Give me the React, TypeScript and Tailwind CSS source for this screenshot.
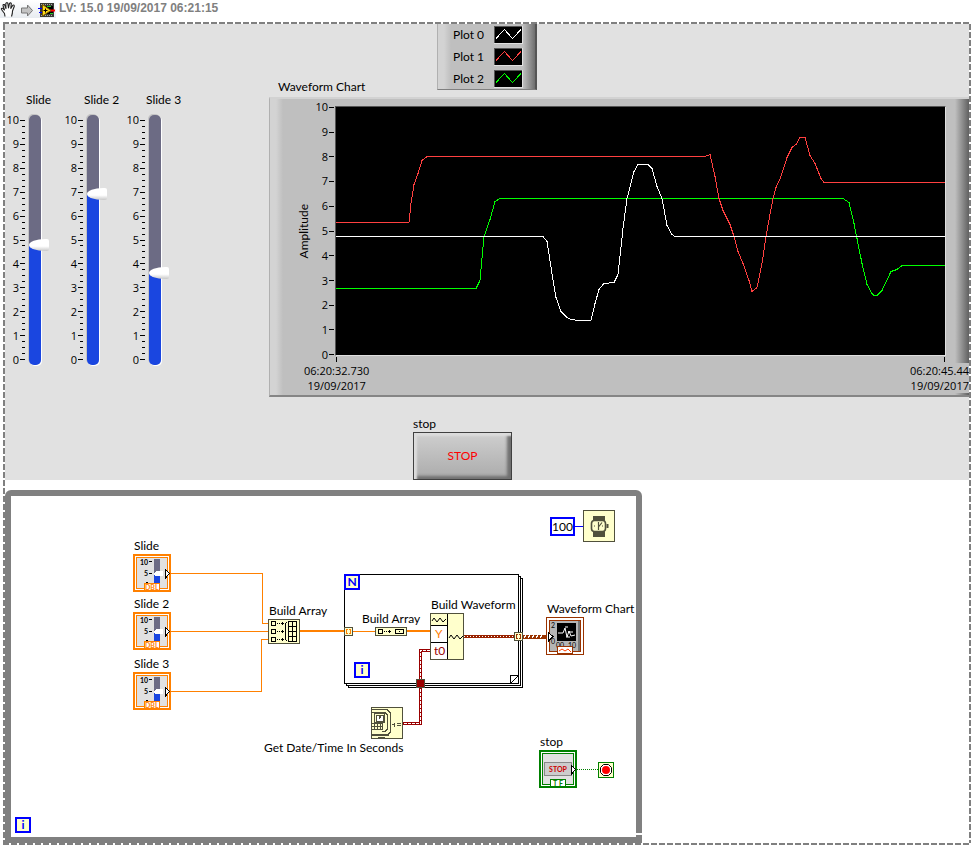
import { useState, type ReactNode } from "react";

type Point = [number, number];

interface Plot {
  name: string;
  color: string;
  points: Point[];
}

const PLOTS: Plot[] = [
  {
    name: "Plot 0",
    color: "#ffffff",
    points: [
      [0, 129], [207, 129], [211, 134], [216, 166], [220, 190], [225, 204], [231, 210], [235, 212],
      [242, 213], [255, 213], [259, 196], [263, 182], [268, 176], [278, 175], [282, 167], [287, 121],
      [291, 91], [298, 64], [302, 57], [312, 57], [316, 61], [321, 79], [326, 91], [331, 118],
      [336, 127], [339, 129], [609, 129],
    ],
  },
  {
    name: "Plot 1",
    color: "#ff4040",
    points: [
      [0, 115], [73, 115], [75, 96], [78, 77], [82, 66], [86, 53], [91, 49], [369, 49], [374, 47],
      [379, 69], [383, 91], [387, 103], [394, 117], [398, 129], [402, 144], [407, 156], [413, 173],
      [416, 184], [421, 180], [426, 156], [430, 129], [434, 107], [437, 91], [440, 80], [445, 69],
      [451, 50], [456, 40], [460, 37], [464, 30], [469, 30], [474, 48], [479, 56], [485, 71],
      [488, 75], [609, 75],
    ],
  },
  {
    name: "Plot 2",
    color: "#00ff00",
    points: [
      [0, 181], [140, 181], [144, 173], [148, 129], [154, 112], [159, 94], [164, 91], [507, 91],
      [513, 95], [518, 116], [521, 131], [526, 156], [531, 177], [536, 186], [538, 188], [541, 188],
      [546, 183], [555, 164], [561, 162], [566, 158], [609, 158],
    ],
  },
];

const SCALE = [10, 9, 8, 7, 6, 5, 4, 3, 2, 1, 0];

const toPoints = (points: Point[]) => points.map((p) => p.join(",")).join(" ");

function HandIcon() {
  return (
    <svg width="16" height="18" viewBox="0 0 16 18" aria-hidden="true">
      <path
        d="M5 16.5 L4.5 13.5 L1.5 9.5 Q1 8 2.5 8.2 L4.5 10 L3 5.5 Q3 4 4.5 4.6 L6 8.5 L5.8 3.5 Q6.6 2 7.8 3.2 L8.5 8 L9.5 3.4 Q10.6 2.2 11.3 3.6 L10.8 8.4 L12.8 5.2 Q14.4 4.6 14.3 6.3 L12.5 11 L12.3 13.5 L11.5 16.5"
        fill="#fff"
        stroke="#222"
        strokeWidth="1.1"
        strokeLinejoin="round"
      />
    </svg>
  );
}

function ArrowIcon() {
  return (
    <svg width="14" height="18" viewBox="0 0 14 18" aria-hidden="true">
      <path d="M1.5 8 H7.5 V5 L12.5 10.5 L7.5 16 V13 H1.5 Z" fill="#c3c3c3" stroke="#777" />
    </svg>
  );
}

function ViIcon() {
  return (
    <svg width="18" height="18" viewBox="0 0 18 18" aria-hidden="true">
      <rect x="2" y="3" width="14" height="14" fill="#3a3a34" />
      <path d="M3 4.5H15M3 15.5H15" stroke="#aaa" strokeDasharray="1 1" />
      <rect x="4" y="6" width="11" height="8" fill="#000" />
      <path d="M9 6.5h4M12 13.5h3" stroke="#2c2" />
      <path d="M0 8.5H5M1 12.5H5" stroke="#00f" strokeWidth="1" />
      <path d="M12 10.5H17" stroke="#f00" strokeWidth="2" />
      <path d="M4.5 4.5 L13 10.5 L4.5 16 Z" fill="#ffd91a" stroke="#7a5c00" />
      <path d="M5.5 10.5H9.5M7.5 8.5V12.5" stroke="#000" />
    </svg>
  );
}

function Slide({ id, label, initial }: { id: string; label: string; initial: number }) {
  const [value, setValue] = useState(initial);
  const fill = 2.5 + value * 9.5;

  return (
    <div>
      <label htmlFor={id} className="block h-4 pl-[21px] whitespace-nowrap">
        {label}
      </label>
      <div className="flex h-64 items-center mt-1">
        <div className="flex flex-col justify-between h-64 w-[14px] text-[11px] leading-4 font-['Open_Sans',sans-serif]">
          {SCALE.map((n) => (
            <span key={n} className="flex justify-end">{n}</span>
          ))}
        </div>
        <svg width="10" height="240" shapeRendering="crispEdges" aria-hidden="true">
          {Array.from({ length: 41 }, (_, i) => (
            <rect
              key={i}
              x={i % 4 === 0 ? 1 : 3}
              y={Math.round((i * 239) / 40)}
              width={i % 4 === 0 ? 5 : 3}
              height="1"
              fill="#000"
            />
          ))}
        </svg>
        <input
          id={id}
          type="range"
          min={0}
          max={10}
          step={0.05}
          value={value}
          onChange={(e) => setValue(Number(e.target.value))}
          style={{ backgroundImage: `linear-gradient(to top, #1a46e0 ${fill}%, #6c6b84 ${fill}%)` }}
          className="appearance-none w-3 h-[250px] rounded-[5px] shadow-[1px_1px_0_#fff,-1px_-1px_0_#c4c4c4] [writing-mode:vertical-lr] [direction:rtl] [&::-webkit-slider-thumb]:appearance-none [&::-webkit-slider-thumb]:ml-2 [&::-webkit-slider-thumb]:w-5 [&::-webkit-slider-thumb]:h-3 [&::-webkit-slider-thumb]:bg-linear-to-b [&::-webkit-slider-thumb]:from-white [&::-webkit-slider-thumb]:from-60% [&::-webkit-slider-thumb]:to-[#c8c8c8] [&::-webkit-slider-thumb]:[border-radius:16px_2px_2px_16px/6px_2px_2px_6px]"
        />
      </div>
    </div>
  );
}

function Legend() {
  return (
    <div className="w-25 h-[66px] border-l border-l-[#b0b0b0] border-r-2 border-r-[#555] border-b border-b-[#808080] bg-[linear-gradient(90deg,#d3d3d3_0_6px,#bfbfbf_13px_calc(100%-12px),#6e6e6e)]">
      {PLOTS.map((plot) => (
        <div key={plot.name} className="flex items-center h-[22px] pl-[15px] gap-[11px]">
          <span className="w-[30px] whitespace-nowrap">{plot.name}</span>
          <svg width="29" height="18" shapeRendering="crispEdges" aria-hidden="true">
            <rect width="29" height="18" fill="#e0e0e0" />
            <rect width="28" height="17" fill="#555" />
            <rect x="1" y="1" width="27" height="16" fill="#000" />
            <path d="M2 12.5 L10.5 3.5 L18.5 12.5 L27 3.5" fill="none" stroke={plot.color} />
          </svg>
        </div>
      ))}
    </div>
  );
}

function WaveformChart() {
  return (
    <figure className="border-t-2 border-t-[#d2d2d2] border-b-2 border-b-[#858585] border-l border-l-[#b0b0b0] pb-0.5 bg-[linear-gradient(90deg,#d3d3d3_0_6px,#bfbfbf_13px_calc(100%-14px),#606060)]">
      <div className="flex pl-[26px] pr-[23px]">
        <div className="w-4 flex items-center justify-center">
          <span className="[writing-mode:vertical-rl] rotate-180">Amplitude</span>
        </div>
        <div className="flex flex-col justify-between h-66 w-4 text-[11px] leading-4 font-['Open_Sans',sans-serif]">
          {SCALE.map((n) => (
            <span key={n} className="flex justify-end">{n}</span>
          ))}
        </div>
        <svg width="7" height="248" className="mt-2" shapeRendering="crispEdges" aria-hidden="true">
          {SCALE.map((n, i) => (
            <rect key={n} x="1" y={Math.round(i * 24.7)} width="5" height="1" fill="#000" />
          ))}
        </svg>
        <div className="flex-1 min-w-0 mt-[7px]">
          <div className="h-[250px] bg-black border border-t-[#555] border-l-[#555] border-b-[#e0e0e0] border-r-[#e0e0e0]">
            <svg
              className="block w-full h-full"
              viewBox="0 0 609 248"
              preserveAspectRatio="none"
              shapeRendering="crispEdges"
              role="img"
              aria-label="Waveform Chart"
            >
              <g transform="translate(0 0.5)">
                {[...PLOTS].reverse().map((plot) => (
                  <polyline
                    key={plot.name}
                    points={toPoints(plot.points)}
                    fill="none"
                    stroke={plot.color}
                    vectorEffect="non-scaling-stroke"
                  />
                ))}
              </g>
            </svg>
          </div>
          <div className="flex justify-between px-px mt-px">
            <div className="w-px h-[5px] bg-black" />
            <div className="w-px h-[5px] bg-black" />
          </div>
        </div>
      </div>
      <div className="flex justify-between pl-[34px] text-[11px] leading-[15px] font-['Open_Sans',sans-serif] whitespace-nowrap">
        <div className="text-center">
          <p>06:20:32.730</p>
          <p>19/09/2017</p>
        </div>
        <div className="text-right bg-[#bfbfbf]">
          <p>06:20:45.44</p>
          <p>19/09/2017</p>
        </div>
      </div>
    </figure>
  );
}

function FrontPanel() {
  return (
    <section className="flex bg-[#e1e1e1]">
      <div className="grid grid-cols-[58px_62px_58px] pt-[68px] mr-[86px]">
        <Slide id="slide" label="Slide" initial={4.8} />
        <Slide id="slide-2" label="Slide 2" initial={6.95} />
        <Slide id="slide-3" label="Slide 3" initial={3.6} />
      </div>
      <div className="flex-1 min-w-0">
        <div className="flex h-[73px] items-start">
          <h2 className="w-42 pl-[9px] pb-0.5 self-end">Waveform Chart</h2>
          <Legend />
        </div>
        <WaveformChart />
        <div className="ml-36 mt-[19px]">
          <label htmlFor="stop" className="block">stop</label>
          <button
            id="stop"
            type="button"
            className="block w-[99px] h-12 border border-[#404040] bg-linear-to-b from-[#cfcfcf] to-[#ababab] text-[#ff0000] shadow-[inset_3px_3px_2px_#dcdcdc,inset_-4px_-3px_3px_#707070]"
          >
            STOP
          </button>
        </div>
      </div>
    </section>
  );
}

/* Wires, drawn under the nodes */
function Wires() {
  return (
    <svg width="625" height="341" className="absolute left-0 top-0" shapeRendering="crispEdges" fill="none" aria-hidden="true">
      {/* for loop and the edges of the stacked frames behind it */}
      <path d="M333.5 78.5H507.5V187.5H333.5Z" stroke="#000" />
      <path d="M508 80.5H509.5V189.5H335.5V188" stroke="#000" />
      <path d="M510 82.5H511.5V191.5H337.5V190" stroke="#000" />
      <path d="M499.5 187V179.5H507" stroke="#000" />
      <path d="M500 187L507 180" stroke="#000" shapeRendering="auto" />

      <g stroke="#ff8000">
        <path d="M160 77.5H251.5V127.5H257" />
        <path d="M160 135.5H257" />
        <path d="M160 195.5H250.5V143.5H257" />
        <path d="M289 135H334" strokeWidth="2" />
        <path d="M341 135.5H364" />
        <path d="M395 135H419" strokeWidth="2" />
      </g>

      <path d="M419 154.5H409.5V227.5H392" stroke="#990000" strokeWidth="3" />
      <path d="M419 154.5H409.5V227.5H392" stroke="#fff" strokeDasharray="3 1" />
      <path d="M453 140.5H504" stroke="#992200" strokeWidth="3" />
      <path d="M453 140.5H504" stroke="#fff" strokeDasharray="1 2" />
      <path d="M512 140.5H535" stroke="#993300" strokeWidth="4" />
      <path d="M513 142l2-3m2 3l2-3m2 3l2-3m2 3l2-3m2 3l2-3" stroke="#fff" />

      <path d="M564 30.5H572" stroke="#00f" />
      <path d="M566 273.5H587" stroke="#008000" strokeDasharray="1 1" />
    </svg>
  );
}

function SlideTerminal() {
  return (
    <svg width="38" height="38" shapeRendering="crispEdges" aria-hidden="true">
      <rect width="38" height="38" fill="#ff8000" />
      <rect x="2" y="2" width="34" height="34" fill="#fff" />
      <rect x="3" y="3" width="32" height="32" fill="#ff8000" />
      <rect x="4" y="4" width="30" height="30" fill="#e1e1e1" />
      <path d="M21 5h6v25h-6z" fill="#6c6b84" />
      <path d="M21 21h6v12h-6z" fill="#1a46e0" />
      <path d="M20 20 L23 17 H30 V22 H23 Z" fill="#fff" />
      <path d="M16 7.5h3M16 19.5h3M13 28.5h2" stroke="#000" />
      <text x="7" y="11" fontSize="7" fontWeight="700">10</text>
      <text x="11" y="22" fontSize="7" fontWeight="700">5</text>
      <path d="M32.5 15.5V24L36.5 19.5Z" fill="#fff" stroke="#000" />
      <rect x="11.5" y="29.5" width="15" height="7" fill="#fff" stroke="#ff8000" />
      <text x="12" y="36" fontSize="7" fontWeight="700" fill="#ff8000">DBL</text>
    </svg>
  );
}

function BuildArrayIcon() {
  return (
    <svg width="32" height="25" shapeRendering="crispEdges" fill="none" stroke="#000" aria-hidden="true">
      <rect x=".5" y=".5" width="31" height="24" fill="#ffffcc" stroke="#50503c" />
      {[2, 10, 18].map((y) => (
        <g key={y}>
          <rect x="3.5" y={y + 0.5} width="4" height="4" />
          <path d={`M9 ${y + 2.5}h4`} strokeDasharray="1 1" />
          <path d={`M13 ${y + 2.5}h3M14.5 ${y + 1}v3`} />
        </g>
      ))}
      <path d="M18.5 3L17.5 5V20L18.5 22" />
      <path d="M20.5 2.5H28.5V22.5H20.5ZM24.5 2.5V22.5M20.5 7.5H28.5M20.5 12.5H28.5M20.5 17.5H28.5" />
    </svg>
  );
}

function SmallBuildArrayIcon() {
  return (
    <svg width="32" height="9" shapeRendering="crispEdges" fill="none" stroke="#000" aria-hidden="true">
      <rect x=".5" y=".5" width="31" height="8" fill="#ffffcc" stroke="#50503c" />
      <rect x="3.5" y="2.5" width="4" height="4" />
      <path d="M9 4.5h4" strokeDasharray="1 1" />
      <path d="M13 4.5h3M14.5 3v3M24 4.5h1" />
      <rect x="20.5" y="2.5" width="8" height="4" />
    </svg>
  );
}

function BuildWaveformIcon() {
  const wave = "l2-3l3 4l3-4l3 4l3-3";
  return (
    <svg width="34" height="47" shapeRendering="crispEdges" fill="none" stroke="#000" aria-hidden="true">
      <rect x=".5" y=".5" width="33" height="46" fill="#ffffcc" stroke="#50503c" />
      <path d="M1 12h16v34H1z" fill="#fff" stroke="none" />
      <path d="M1 12.5H17M1 29.5H17M17.5 1V46" />
      <g shapeRendering="auto">
        <path d={`M2 8${wave}`} />
        <path d={`M19 25${wave}`} />
      </g>
      <text x="5" y="25" fontSize="12" fill="#ff8000" stroke="none">Y</text>
      <text x="4" y="42" fontSize="12" fill="#990000" stroke="none">t0</text>
    </svg>
  );
}

function Tunnel({ color }: { color: string }) {
  return (
    <svg width="9" height="9" shapeRendering="crispEdges" fill="none" aria-hidden="true">
      <rect x=".5" y=".5" width="8" height="8" fill="#ffffcc" stroke="#50503c" />
      <path d="M4 2.5H2.5V6.5H4M5 2.5H6.5V6.5H5" stroke={color} />
    </svg>
  );
}

function DateTimeIcon() {
  return (
    <svg width="32" height="32" shapeRendering="crispEdges" fill="none" stroke="#50503c" aria-hidden="true">
      <rect x=".5" y=".5" width="31" height="31" fill="#ffffcc" />
      <path d="M1 2.5H16L19.5 6V25L17 27.5H1M1 5.5H14L16.5 8V22L14 24.5H11" />
      <rect x="3.5" y="6.5" width="10" height="9" />
      <path d="M5 8h7v6H5z" fill="#fff" />
      <path d="M8.5 8V11L11 8" />
      <path d="M1 16.5H11V22.5H1M1 19.5H11M3.5 16V23M6.5 16V23M9.5 16V23" />
      <path d="M1 28.5H18M7 30.5H14" />
      <path d="M21 17.5H24M23.5 15.5V20M26 16.5H30M26 18.5H30" />
    </svg>
  );
}

function TimerIcon() {
  return (
    <svg width="32" height="32" fill="none" stroke="#50503c" aria-hidden="true">
      <rect x=".5" y=".5" width="31" height="31" fill="#ffffcc" shapeRendering="crispEdges" />
      <path d="M10 6h12v5H10zM10 21h12v6H10z" fill="#50503c" stroke="none" />
      <rect x="8.5" y="10.5" width="14" height="11" rx="3" fill="#ffffcc" strokeWidth="1.6" />
      <path d="M24.5 14v4" strokeWidth="2" />
      <path d="M15.5 12v8M15.5 17L19 12.5" strokeWidth="1.2" />
      <path d="M11 16h1M19 16h1" />
    </svg>
  );
}

function ChartTerminal() {
  return (
    <svg width="38" height="38" shapeRendering="crispEdges" fill="none" aria-hidden="true">
      <rect x=".5" y=".5" width="37" height="37" fill="#fff" stroke="#993300" />
      <rect x="3.5" y="3.5" width="31" height="31" fill="#b5b5b5" stroke="#993300" />
      <path d="M32 4h2v30h-2z" fill="#777" />
      <rect x="11" y="6" width="19" height="18" fill="#000" />
      <path d="M12 16h5l2-5 2 9 2-6 2 5 4-1M19 10h3M22 15h5M20 20h4" stroke="#fff" shapeRendering="auto" />
      <text x="5" y="11" fontSize="7" fill="#000">2</text>
      <text x="5" y="27" fontSize="7" fill="#000">0</text>
      <text x="10" y="31" fontSize="7" fill="#000">00</text>
      <text x="22" y="31" fontSize="7" fill="#000">10</text>
      <path d="M2.5 15.5V24L7 19.5Z" fill="#fff" stroke="#000" />
      <path d="M11.5 36.5V29.5H26.5V36.5Z" fill="#fff" stroke="#993300" />
      <path d="M13 34l3-2 3 2 3-2 3 3" stroke="#ff4000" shapeRendering="auto" />
    </svg>
  );
}

function StopTerminal() {
  return (
    <svg width="38" height="38" shapeRendering="crispEdges" aria-hidden="true">
      <rect width="38" height="38" fill="#008000" />
      <rect x="2" y="2" width="34" height="34" fill="#fff" />
      <rect x="3" y="3" width="32" height="32" fill="#008000" />
      <rect x="4" y="4" width="30" height="30" fill="#e1e1e1" />
      <rect x="5.5" y="12.5" width="27" height="13" fill="#ccc" stroke="#888" />
      <text x="19" y="22" fontSize="7" fontWeight="700" textAnchor="middle" fill="#cc0000">STOP</text>
      <path d="M32.5 15.5V24L36.5 19.5Z" fill="#fff" stroke="#000" />
      <rect x="11.5" y="29.5" width="15" height="7" fill="#fff" stroke="#008000" />
      <text x="14" y="36" fontSize="7" fontWeight="700" fill="#008000">T</text>
      <text x="20" y="36" fontSize="7" fontWeight="700" fill="#008000">F</text>
    </svg>
  );
}

function LoopStopIcon() {
  return (
    <svg width="16" height="16" aria-hidden="true">
      <rect x=".5" y=".5" width="15" height="15" fill="#ffffcc" stroke="#008000" />
      <path d="M5.5 2.5h5l3 3v5l-3 3h-5l-3-3v-5z" fill="#fff" stroke="#000" />
      <circle cx="8" cy="8" r="4" fill="#f00" />
    </svg>
  );
}

function Terminal({ children }: { children: ReactNode }) {
  return (
    <span className="flex items-center justify-center size-4 border-2 border-[#0000ff] bg-[#ffffcc] font-bold leading-3 text-[#0000ff]">
      {children}
    </span>
  );
}

function BlockDiagram() {
  return (
    <section className="w-[66.1%] mt-2.5 border-6 border-[#808080] rounded-tl-md rounded-tr-md">
      <div className="relative h-[341px] whitespace-nowrap">
        <Wires />

        <span className="absolute left-[123px] top-[42px]">Slide</span>
        <div className="absolute left-[122px] top-[58px]"><SlideTerminal /></div>
        <span className="absolute left-[123px] top-[100px]">Slide 2</span>
        <div className="absolute left-[122px] top-[116px]"><SlideTerminal /></div>
        <span className="absolute left-[123px] top-[160px]">Slide 3</span>
        <div className="absolute left-[122px] top-[176px]"><SlideTerminal /></div>

        <span className="absolute left-[258px] top-[107px]">Build Array</span>
        <div className="absolute left-[257px] top-[123px]"><BuildArrayIcon /></div>

        {/* for loop */}
        <div className="absolute left-[333px] top-[78px]"><Terminal>N</Terminal></div>
        <div className="absolute left-[343px] top-[166px]"><Terminal>i</Terminal></div>
        <div className="absolute left-[333px] top-[131px]"><Tunnel color="#ff8000" /></div>
        <span className="absolute left-[351px] top-[115px]">Build Array</span>
        <div className="absolute left-[364px] top-[131px]"><SmallBuildArrayIcon /></div>
        <span className="absolute left-[420px] top-[101px]">Build Waveform</span>
        <div className="absolute left-[419px] top-[117px]"><BuildWaveformIcon /></div>
        <div className="absolute left-[503px] top-[136px]"><Tunnel color="#993300" /></div>
        <div className="absolute left-[405px] top-[183px] size-[9px] bg-[#990000] border border-[#50503c]" />

        <div className="absolute left-[360px] top-[211px]"><DateTimeIcon /></div>
        <span className="absolute left-[253px] top-[244px]">Get Date/Time In Seconds</span>

        <span className="absolute left-[539px] top-[21px] flex items-center justify-center w-[25px] h-[19px] border-2 border-[#0000ff] bg-white">
          100
        </span>
        <div className="absolute left-[572px] top-[14px]"><TimerIcon /></div>

        <span className="absolute left-[536px] top-[105px]">Waveform Chart</span>
        <div className="absolute left-[535px] top-[121px]"><ChartTerminal /></div>

        <span className="absolute left-[529px] top-[238px]">stop</span>
        <div className="absolute left-[528px] top-[254px]"><StopTerminal /></div>
        <div className="absolute left-[587px] top-[266px]"><LoopStopIcon /></div>

        <div className="absolute left-1 top-[321px]"><Terminal>i</Terminal></div>
        <div className="absolute -right-1.5 bottom-0.5 w-2 h-0.5 bg-white" />
      </div>
    </section>
  );
}

export default function App() {
  return (
    <div className="bg-white text-black text-[12px] leading-4 font-['Lato',sans-serif] [&_svg]:block">
      <header className="flex items-start h-[22px]">
        <div className="flex w-14 h-[18px] gap-1 bg-linear-to-b from-white to-[#e8ecf0]">
          <HandIcon />
          <ArrowIcon />
          <ViIcon />
        </div>
        <h1 className="pl-[3px] font-bold text-[#808080] font-['Liberation_Sans',sans-serif]">
          LV: 15.0 19/09/2017 06:21:15
        </h1>
      </header>

      <main className="mx-[3px]">
        <div className="h-0.5 bg-[repeating-linear-gradient(90deg,#808080_0_6px,#fff_6px_8px)]" />
        <div className="flex">
          <div className="w-0.5 bg-[repeating-linear-gradient(#808080_0_6px,#fff_6px_8px)]" />
          <div className="flex-1 min-w-0">
            <FrontPanel />
            <BlockDiagram />
          </div>
          <div className="w-0.5 bg-[repeating-linear-gradient(#808080_0_6px,#fff_6px_8px)]" />
        </div>
        <div className="h-0.5 bg-[repeating-linear-gradient(90deg,#808080_0_6px,#fff_6px_8px)]" />
      </main>
    </div>
  );
}
